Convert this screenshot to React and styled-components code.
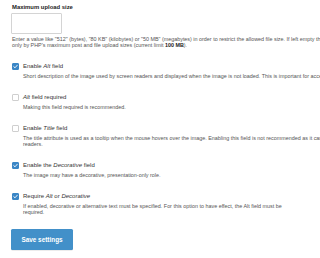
import React from "react";
import styled, { createGlobalStyle } from "styled-components";

const Global = createGlobalStyle`
  html, body {
    margin: 0;
    padding: 0;
    background: #fff;
    overflow: hidden;
  }
  body {
    font-family: "Liberation Sans", Arial, sans-serif;
    color: #333;
  }
`;

const items = [
  {
    checked: true,
    label: (
      <>
        Enable <em>Alt</em> field
      </>
    ),
    desc: [
      "Short description of the image used by screen readers and displayed when the image is not loaded. This is important for accessibility.",
    ],
  },
  {
    checked: false,
    label: (
      <>
        <em>Alt</em> field required
      </>
    ),
    desc: ["Making this field required is recommended."],
  },
  {
    checked: false,
    label: (
      <>
        Enable <em>Title</em> field
      </>
    ),
    desc: [
      "The title attribute is used as a tooltip when the mouse hovers over the image. Enabling this field is not recommended as it can cause problems with screen",
      "readers.",
    ],
  },
  {
    checked: true,
    label: (
      <>
        Enable the <em>Decorative</em> field
      </>
    ),
    desc: ["The image may have a decorative, presentation-only role."],
  },
  {
    checked: true,
    label: (
      <>
        Require <em>Alt</em> or <em>Decorative</em>
      </>
    ),
    desc: [
      "If enabled, decorative or alternative text must be specified. For this option to have effect, the Alt field must be",
      "required.",
    ],
  },
];

function App() {
  return (
    <Page>
      <Global />
      <Field>
        <Title>Maximum upload size</Title>
        <TextInput type="text" />
        <Description>
          <Line>
            Enter a value like "512" (bytes), "80 KB" (kilobytes) or "50 MB" (megabytes) in order to restrict the allowed file size. If left empty the file sizes will be limited
          </Line>
          <Line>
            only by PHP's maximum post and file upload sizes (current limit <strong>100 MB</strong>).
          </Line>
        </Description>
      </Field>

      {items.map((item, i) => (
        <CheckItem key={i}>
          <Row>
            <Box $checked={item.checked}>
              {item.checked && (
                <svg width="5" height="5" viewBox="0 0 10 10">
                  <path d="M1.5 5.2 L4 7.6 L8.6 2.4" fill="none" stroke="#fff" strokeWidth="1.8" strokeLinecap="round" strokeLinejoin="round" />
                </svg>
              )}
            </Box>
            <Label>{item.label}</Label>
          </Row>
          <Description $indent>
            {item.desc.map((line, j) => (
              <Line key={j}>{line}</Line>
            ))}
          </Description>
        </CheckItem>
      ))}

      <Actions>
        <Button>Save settings</Button>
      </Actions>
    </Page>
  );
}

const Page = styled.div`
  box-sizing: border-box;
  width: 100%;
  height: 258px;
  padding: 0 0 0 11px;
  overflow: hidden;
`;

const Field = styled.div`
  display: flex;
  flex-direction: column;
  align-items: flex-start;
  width: 100%;
`;

const Title = styled.div`
  font-size: 5.9px;
  font-weight: bold;
  line-height: 10px;
  margin-top: 2px;
  margin-left: 1px;
  color: #222;
`;

const TextInput = styled.input`
  box-sizing: border-box;
  width: 51px;
  height: 21px;
  margin: 1px 0 0;
  padding: 0;
  border: 1px solid #d4d4d4;
  border-radius: 1px;
  background: #fff;
`;

const Description = styled.div`
  font-size: 5.4px;
  line-height: 6px;
  color: #555;
  width: 100%;
  overflow: hidden;
  margin-top: ${(p) => (p.$indent ? "3px" : "2px")};
  padding-left: ${(p) => (p.$indent ? "12px" : "1px")};
  box-sizing: border-box;

  strong {
    color: #222;
  }
`;

const Line = styled.div`
  white-space: nowrap;
`;

const CheckItem = styled.div`
  margin-top: 14px;
`;

const Row = styled.div`
  display: flex;
  align-items: center;
  height: 8px;
  gap: 4px;
  padding-left: 1px;
`;

const Box = styled.span`
  box-sizing: border-box;
  flex: none;
  width: 7px;
  height: 7px;
  border-radius: 1px;
  display: flex;
  align-items: center;
  justify-content: center;
  background: ${(p) => (p.$checked ? "#3a86c6" : "#fff")};
  border: 1px solid ${(p) => (p.$checked ? "#3a86c6" : "#cfcfcf")};
`;

const Label = styled.span`
  font-size: 6px;
  line-height: 8px;
  color: #333;
  white-space: nowrap;
`;

const Actions = styled.div`
  margin-top: 13px;
`;

const Button = styled.button`
  width: 62px;
  height: 21px;
  border: none;
  border-radius: 1.5px;
  background: #4290c9;
  color: #fff;
  font-family: "Liberation Sans", Arial, sans-serif;
  font-size: 6.4px;
  font-weight: bold;
  padding: 0;
  box-shadow: 0 0.5px 0.5px rgba(0, 0, 0, 0.15);
`;

export default App;
